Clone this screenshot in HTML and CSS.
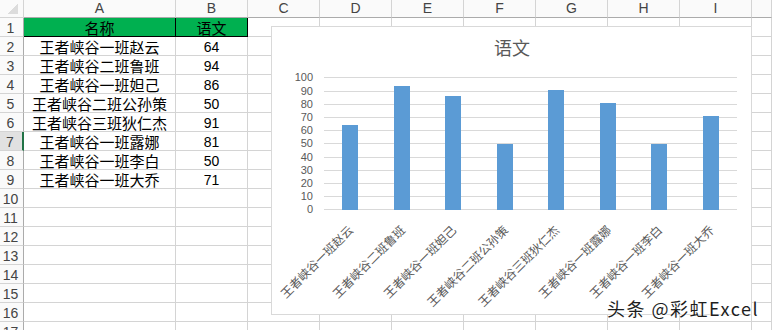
FILE: index.html
```html
<!DOCTYPE html>
<html lang="zh-CN">

<head>
    <meta charset="UTF-8">
    <meta name="viewport" content="width=device-width, initial-scale=1.0">
    <title>语文成绩</title>
    <link rel="stylesheet" href="styles.css">
</head>

<body>
    <div class="book">
        <div class="sheet">
            <div class="corner"></div><div class="hd">A</div><div class="hd">B</div><div class="hd">C</div><div class="hd">D</div><div class="hd">E</div><div class="hd">F</div><div class="hd">G</div><div class="hd">H</div><div class="hd">I</div><div class="hd"></div>

            <div class="rh">1</div><div class="c title">名称</div><div class="c title">语文</div><div class="c"></div><div class="c"></div><div class="c"></div><div class="c"></div><div class="c"></div><div class="c"></div><div class="c"></div><div class="c"></div>
            <div class="rh">2</div><div class="c">王者峡谷一班赵云</div><div class="c num">64</div><div class="c"></div><div class="c"></div><div class="c"></div><div class="c"></div><div class="c"></div><div class="c"></div><div class="c"></div><div class="c"></div>
            <div class="rh">3</div><div class="c">王者峡谷二班鲁班</div><div class="c num">94</div><div class="c"></div><div class="c"></div><div class="c"></div><div class="c"></div><div class="c"></div><div class="c"></div><div class="c"></div><div class="c"></div>
            <div class="rh">4</div><div class="c">王者峡谷一班妲己</div><div class="c num">86</div><div class="c"></div><div class="c"></div><div class="c"></div><div class="c"></div><div class="c"></div><div class="c"></div><div class="c"></div><div class="c"></div>
            <div class="rh">5</div><div class="c">王者峡谷二班公孙策</div><div class="c num">50</div><div class="c"></div><div class="c"></div><div class="c"></div><div class="c"></div><div class="c"></div><div class="c"></div><div class="c"></div><div class="c"></div>
            <div class="rh">6</div><div class="c">王者峡谷三班狄仁杰</div><div class="c num">91</div><div class="c"></div><div class="c"></div><div class="c"></div><div class="c"></div><div class="c"></div><div class="c"></div><div class="c"></div><div class="c"></div>
            <div class="rh active">7</div><div class="c">王者峡谷一班露娜</div><div class="c num">81</div><div class="c"></div><div class="c"></div><div class="c"></div><div class="c"></div><div class="c"></div><div class="c"></div><div class="c"></div><div class="c"></div>
            <div class="rh">8</div><div class="c">王者峡谷一班李白</div><div class="c num">50</div><div class="c"></div><div class="c"></div><div class="c"></div><div class="c"></div><div class="c"></div><div class="c"></div><div class="c"></div><div class="c"></div>
            <div class="rh">9</div><div class="c">王者峡谷一班大乔</div><div class="c num">71</div><div class="c"></div><div class="c"></div><div class="c"></div><div class="c"></div><div class="c"></div><div class="c"></div><div class="c"></div><div class="c"></div>
            <div class="rh">10</div><div class="c"></div><div class="c"></div><div class="c"></div><div class="c"></div><div class="c"></div><div class="c"></div><div class="c"></div><div class="c"></div><div class="c"></div><div class="c"></div>
            <div class="rh">11</div><div class="c"></div><div class="c"></div><div class="c"></div><div class="c"></div><div class="c"></div><div class="c"></div><div class="c"></div><div class="c"></div><div class="c"></div><div class="c"></div>
            <div class="rh">12</div><div class="c"></div><div class="c"></div><div class="c"></div><div class="c"></div><div class="c"></div><div class="c"></div><div class="c"></div><div class="c"></div><div class="c"></div><div class="c"></div>
            <div class="rh">13</div><div class="c"></div><div class="c"></div><div class="c"></div><div class="c"></div><div class="c"></div><div class="c"></div><div class="c"></div><div class="c"></div><div class="c"></div><div class="c"></div>
            <div class="rh">14</div><div class="c"></div><div class="c"></div><div class="c"></div><div class="c"></div><div class="c"></div><div class="c"></div><div class="c"></div><div class="c"></div><div class="c"></div><div class="c"></div>
            <div class="rh">15</div><div class="c"></div><div class="c"></div><div class="c"></div><div class="c"></div><div class="c"></div><div class="c"></div><div class="c"></div><div class="c"></div><div class="c"></div><div class="c"></div>
            <div class="rh">16</div><div class="c"></div><div class="c"></div><div class="c"></div><div class="c"></div><div class="c"></div><div class="c"></div><div class="c"></div><div class="c"></div><div class="c"></div><div class="c"></div>
            <div class="rh">17</div><div class="c"></div><div class="c"></div><div class="c"></div><div class="c"></div><div class="c"></div><div class="c"></div><div class="c"></div><div class="c"></div><div class="c"></div><div class="c"></div>
        </div>

        <!-- 图表：语文 -->
        <div class="chart">
            <svg width="479" height="287" viewBox="0 0 479 287">
                <text class="ttl" x="240" y="28">语文</text>

                <g class="grid">
                    <line x1="52" x2="465" y1="50.5" y2="50.5" />
                    <line x1="52" x2="465" y1="64.5" y2="64.5" />
                    <line x1="52" x2="465" y1="77.5" y2="77.5" />
                    <line x1="52" x2="465" y1="90.5" y2="90.5" />
                    <line x1="52" x2="465" y1="103.5" y2="103.5" />
                    <line x1="52" x2="465" y1="116.5" y2="116.5" />
                    <line x1="52" x2="465" y1="130.5" y2="130.5" />
                    <line x1="52" x2="465" y1="143.5" y2="143.5" />
                    <line x1="52" x2="465" y1="156.5" y2="156.5" />
                    <line x1="52" x2="465" y1="169.5" y2="169.5" />
                    <line x1="52" x2="465" y1="182.5" y2="182.5" />
                </g>

                <g class="ylab">
                    <text x="41" y="54">100</text>
                    <text x="41" y="68">90</text>
                    <text x="41" y="81">80</text>
                    <text x="41" y="94">70</text>
                    <text x="41" y="107">60</text>
                    <text x="41" y="120">50</text>
                    <text x="41" y="134">40</text>
                    <text x="41" y="147">30</text>
                    <text x="41" y="160">20</text>
                    <text x="41" y="173">10</text>
                    <text x="41" y="186">0</text>
                </g>

                <g class="bars">
                    <rect x="70" y="98" width="16" height="85" />
                    <rect x="122" y="59" width="16" height="124" />
                    <rect x="173" y="69" width="16" height="114" />
                    <rect x="225" y="117" width="16" height="66" />
                    <rect x="276" y="63" width="16" height="120" />
                    <rect x="328" y="76" width="16" height="107" />
                    <rect x="379" y="117" width="16" height="66" />
                    <rect x="431" y="89" width="16" height="94" />
                </g>

                <g class="xlab">
                    <text transform="translate(82 204) rotate(-45)">王者峡谷一班赵云</text>
                    <text transform="translate(134 204) rotate(-45)">王者峡谷二班鲁班</text>
                    <text transform="translate(185 204) rotate(-45)">王者峡谷一班妲己</text>
                    <text transform="translate(237 204) rotate(-45)">王者峡谷二班公孙策</text>
                    <text transform="translate(288 204) rotate(-45)">王者峡谷三班狄仁杰</text>
                    <text transform="translate(340 204) rotate(-45)">王者峡谷一班露娜</text>
                    <text transform="translate(391 204) rotate(-45)">王者峡谷一班李白</text>
                    <text transform="translate(443 204) rotate(-45)">王者峡谷一班大乔</text>
                </g>
            </svg>
        </div>

        <div class="mark">头条 @彩虹Excel</div>
    </div>
</body>

</html>
```

FILE: styles.css
```css
body {
    margin: 0;
    padding: 0;
    background-color: #fff;
    overflow: hidden;
}

.book {
    position: relative;
    width: 772px;
    height: 330px;
    overflow: hidden;
}

.sheet {
    display: grid;
    grid-template-columns: 24px 152px repeat(8, 72px) 1fr;
    grid-template-rows: 18px repeat(17, 19px);
    font-family: "Noto Sans CJK SC", sans-serif;
    font-size: 15px;
    color: #000;
}

.sheet > div {
    box-sizing: border-box;
    border-right: 1px solid #d4d4d4;
    border-bottom: 1px solid #d4d4d4;
    white-space: nowrap;
}

.corner {
    background: #fafafa linear-gradient(135deg, transparent 50%, #dcdcdc 50%) no-repeat right 5px bottom 3px / 10px 10px;
}

.sheet > .hd {
    background-color: #fafafa;
    border-bottom-color: #ababab;
    font-family: "Liberation Sans", sans-serif;
    font-size: 14px;
    line-height: 17px;
    text-align: center;
    color: #444;
}

.sheet > .rh {
    background-color: #fafafa;
    border-right-color: #ababab;
    font-family: "Liberation Sans", sans-serif;
    font-size: 14px;
    line-height: 17px;
    padding: 2px 2px 0 0;
    text-align: center;
    color: #444;
}

.sheet > .rh.active {
    background-color: #e1e1e1;
    border-right: 2px solid #217346;
}

.sheet > .c {
    line-height: 17px;
    padding-top: 1px;
    text-align: center;
}

.sheet > .num {
    font-family: "Liberation Sans", sans-serif;
    font-size: 14px;
    padding-top: 2px;
}

.sheet > .title {
    background-color: #00b050;
    border-right-color: #000;
    border-bottom-color: #000;
}

.chart {
    position: absolute;
    left: 271px;
    top: 26px;
    width: 481px;
    height: 289px;
    box-sizing: border-box;
    border: 1px solid #d9d9d9;
    background-color: #fff;
}

.chart svg {
    display: block;
}

.ttl {
    font-family: "Noto Sans CJK SC", sans-serif;
    font-size: 18px;
    fill: #595959;
    text-anchor: middle;
}

.grid line {
    stroke: #d9d9d9;
    stroke-width: 1;
}

.ylab text {
    font-family: "Liberation Sans", sans-serif;
    font-size: 11px;
    fill: #595959;
    text-anchor: end;
}

.bars rect {
    fill: #5b9bd5;
}

.xlab text {
    font-family: "Noto Sans CJK SC", sans-serif;
    font-size: 12px;
    fill: #595959;
    text-anchor: end;
}

.mark {
    position: absolute;
    left: 607px;
    top: 296px;
    font-family: "Noto Sans CJK SC", sans-serif;
    font-size: 18px;
    line-height: 24px;
    letter-spacing: 1.5px;
    color: #1e1e1e;
    text-shadow: 0 0 2px #fff, 0 0 2px #fff, 0 0 1px #fff;
}
```
